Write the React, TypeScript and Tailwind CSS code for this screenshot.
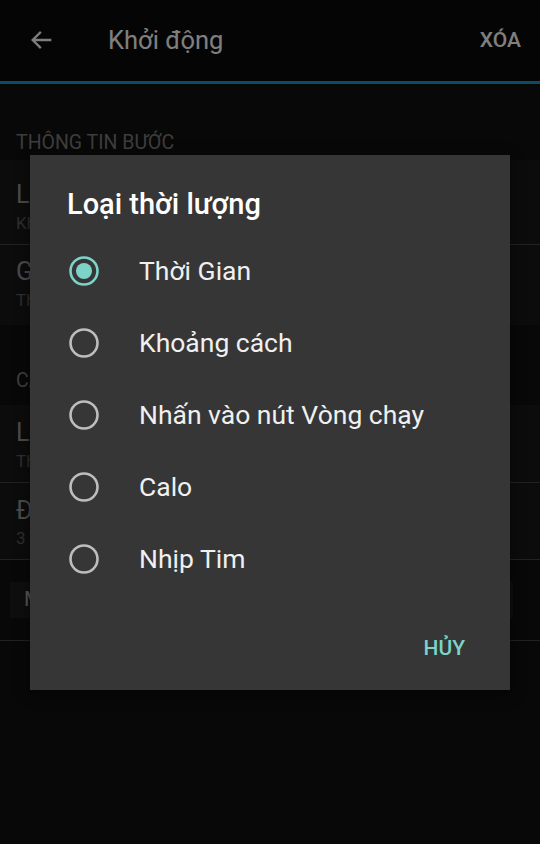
import React from "react";

const options = [
  { label: "Thời Gian", selected: true },
  { label: "Khoảng cách", selected: false },
  { label: "Nhấn vào nút Vòng chạy", selected: false },
  { label: "Calo", selected: false },
  { label: "Nhịp Tim", selected: false },
];

const Radio = ({ selected }: { selected: boolean }) => (
  <svg width="30" height="30" viewBox="0 0 30 30">
    <circle
      cx="15"
      cy="15"
      r="13.5"
      fill="none"
      stroke={selected ? "#7dd3c8" : "#bdbdbd"}
      strokeWidth="2.6"
    />
    {selected && <circle cx="15" cy="15" r="8" fill="#7dd3c8" />}
  </svg>
);

const App = () => {
  return (
    <div
      className="relative h-[844px] w-[540px] overflow-hidden bg-[#101010]"
      style={{ fontFamily: "Roboto, 'Noto Sans', sans-serif" }}
    >
      {/* page under the dialog */}
      <div className="flex h-[81px] items-center bg-[#0a0a0a] px-[28px]">
        <svg width="28" height="28" viewBox="0 0 24 24" className="mt-[-2px]">
          <path
            d="M20 12H4.5M11 5l-7 7 7 7"
            fill="none"
            stroke="#fafafa"
            strokeWidth="2"
          />
        </svg>
        <span className="ml-[52px] text-[25.5px] text-white">Khởi động</span>
        <span className="ml-auto mr-[-9px] text-[21px] font-medium text-white">XÓA</span>
      </div>
      <div className="h-[3px] bg-[#1a94d0]" />

      <div className="h-[76px] pl-[16px] pt-[48px] text-[19.5px] leading-[22px] text-[#7a7a7a]">
        THÔNG TIN BƯỚC
      </div>
      <div className="bg-[#181818]">
        <div className="h-[85px] border-b border-[#444] pl-[16px] pt-[21px]">
          <div className="text-[25px] leading-[28px] text-[#959595]">Loại bước</div>
          <div className="text-[17px] leading-[28px] text-[#5c5c5c]">Khởi động</div>
        </div>
        <div className="h-[80px] pl-[16px] pt-[13px]">
          <div className="text-[25px] leading-[28px] text-[#959595]">Ghi chú</div>
          <div className="text-[17px] leading-[28px] text-[#5c5c5c]">Thêm ghi chú</div>
        </div>
      </div>
      <div className="h-[80px] pl-[16px] pt-[45px] text-[19.5px] leading-[22px] text-[#7a7a7a]">
        CÀI ĐẶT
      </div>
      <div className="bg-[#181818]">
        <div className="h-[78px] border-b border-[#444] pl-[16px] pt-[14px]">
          <div className="text-[25px] leading-[28px] text-[#959595]">Loại thời lượng</div>
          <div className="text-[17px] leading-[28px] text-[#5c5c5c]">Thời Gian</div>
        </div>
        <div className="h-[77px] border-b border-[#444] pl-[16px] pt-[14px]">
          <div className="text-[25px] leading-[28px] text-[#959595]">Đã đặt giờ</div>
          <div className="text-[17px] leading-[26px] text-[#5c5c5c]">3 phút</div>
        </div>
      </div>
      <div className="h-[81px] border-b border-[#444] pl-[10px] pr-[27px] pt-[22px]">
        <div className="flex h-[36px] items-center bg-[#1c1c1c] pl-[14px] text-[21px] text-[#b0b0b0]">
          MỤC TIÊU
        </div>
      </div>

      {/* scrim */}
      <div className="absolute inset-0 bg-black/50" />

      {/* dialog */}
      <div className="absolute left-[30px] top-[155px] w-[480px] bg-[#363636] shadow-[0_4px_12px_rgba(0,0,0,0.5)]">
        <div className="h-[80px] pl-[37px] pt-[32px] text-[29px] font-medium leading-[34px] text-white">
          Loại thời lượng
        </div>
        {options.map((o) => (
          <div key={o.label} className="flex h-[72px] items-center pl-[39px]">
            <Radio selected={o.selected} />
            <span className="ml-[40px] text-[26.5px] text-[#f0f0f0]">{o.label}</span>
          </div>
        ))}
        <div className="flex h-[95px] justify-end pr-[45px] pt-[40px]">
          <span className="text-[21px] font-medium leading-[26px] text-[#7dd3c8]">HỦY</span>
        </div>
      </div>
    </div>
  );
};

export default App;
